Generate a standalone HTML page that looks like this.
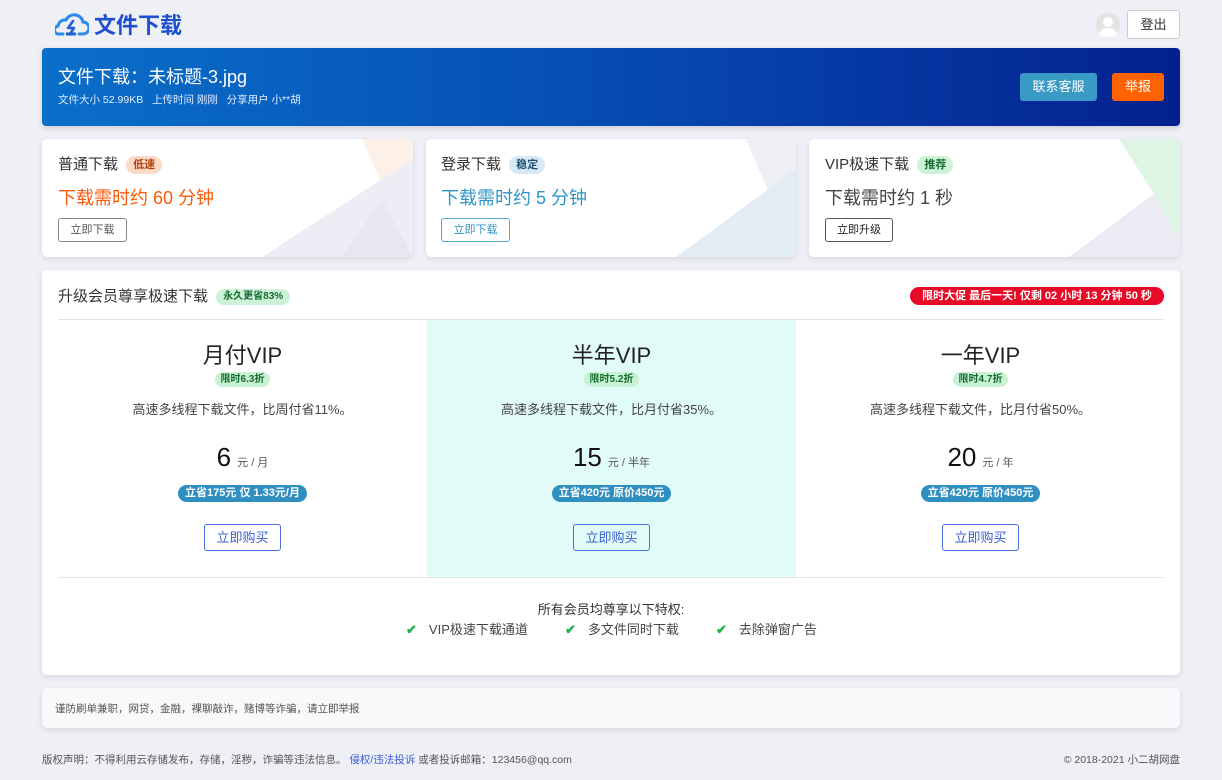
<!DOCTYPE html>
<html><head><meta charset="utf-8"><style>
*{margin:0;padding:0;box-sizing:border-box}
body{width:1222px;height:780px;background:#efeff6;font-family:"Liberation Sans","Noto Sans CJK SC",sans-serif;color:#333;position:relative;overflow:hidden}
.a{position:absolute}
.card{position:absolute;background:#fff;border-radius:5px;box-shadow:0 2px 6px rgba(0,0,0,.1);overflow:hidden}
.tag{display:inline-block;font-size:11px;font-weight:bold;padding:0 7px;line-height:18px;border-radius:9px;vertical-align:middle;margin-left:4px}
.btn{position:absolute;border:1px solid #888;border-radius:3px;font-size:11px;text-align:center;line-height:22px;background:#fff}
.col{position:absolute;top:320px;width:369px;height:257px;text-align:center}
.col h3{font-weight:normal;font-size:22px;color:#222;margin-top:23px;line-height:26px}
.col .t{background:#c9f1d4;color:#146c2e;font-size:10px;font-weight:bold;border-radius:8px;padding:0 6px;line-height:15px;display:inline-block}
.col p{font-size:13px;color:#444;margin-top:12px}
.col .pr{margin-top:24px;font-size:26px;color:#111;line-height:30px}
.col .pr span{font-size:11px;color:#555;margin-left:6px}
.col .bd{display:inline-block;margin-top:7px;background:#2f8fc0;color:#fff;font-size:11px;font-weight:bold;line-height:17px;border-radius:9px;padding:0 7px}
.col .buy{display:block;margin:22px auto 0;width:77px;height:27px;border:1px solid #4a6fe0;color:#3b5fd8;border-radius:3px;font-size:13px;line-height:25px}
.ck{color:#19b34a;font-weight:bold;margin-right:12px}
</style></head><body>
<svg class="a" style="left:55px;top:12px" width="34" height="24" viewBox="0 0 34 24"><path d="M8 22 H4 A4 4 0 0 1 3 14 A7 7 0 0 1 11 8 A9 9 0 0 1 28 10 A6 6 0 0 1 28 22 H24" fill="none" stroke="#2a8bee" stroke-width="3" stroke-linecap="round"/><path d="M18 9 L13 16 H19 L15 22" fill="none" stroke="#1e5fd8" stroke-width="2.5" stroke-linecap="round" stroke-linejoin="round"/><path d="M11 22 H21" stroke="#1e5fd8" stroke-width="3"/></svg>
<div class="a" style="left:94px;top:8px;font-size:22px;font-weight:bold;color:#1d4fcf">文件下载</div>
<div class="a" style="left:1096px;top:13px;width:24px;height:24px;border-radius:50%;background:#e5e2e2;overflow:hidden"><div class="a" style="left:7px;top:4px;width:10px;height:10px;border-radius:50%;background:#fff"></div><div class="a" style="left:3px;top:15px;width:18px;height:14px;border-radius:50%;background:#fff"></div></div>
<div class="a" style="left:1127px;top:10px;width:53px;height:29px;background:#fff;border:1px solid #ccc;border-radius:3px;font-size:13px;text-align:center;line-height:27px;color:#333">登出</div>
<div class="a" style="left:42px;top:48px;width:1138px;height:78px;border-radius:4px;background:linear-gradient(90deg,#0a6fc9 0%,#0650b5 45%,#04208f 100%);box-shadow:0 2px 6px rgba(0,0,0,.15)">
<div class="a" style="left:16px;top:15px;font-size:18px;color:#fff">文件下载：未标题-3.jpg</div>
<div class="a" style="left:16px;top:44px;font-size:10.5px;color:#e2ecff">文件大小 52.99KB &nbsp; 上传时间 刚刚 &nbsp; 分享用户 小**胡</div>
<div class="a" style="left:978px;top:25px;width:77px;height:28px;background:#3a9ac6;border-radius:3px;color:#fff;font-size:13px;text-align:center;line-height:28px">联系客服</div>
<div class="a" style="left:1070px;top:25px;width:52px;height:28px;background:#ff6202;border-radius:3px;color:#fff;font-size:13px;text-align:center;line-height:28px">举报</div>
</div>
<div class="card" style="left:42px;top:139px;width:371px;height:118px">
<svg class="a" style="left:0;top:0" width="371" height="118"><polygon points="320,0 371,0 371,118" fill="#fdf0e6"/><polygon points="371,20 371,118 220,118" fill="#eeedf5"/><polygon points="340,60 371,118 300,118" fill="#e8e6f0"/></svg>
<div class="a" style="left:16px;top:14px;font-size:15px;color:#333">普通下载 <span class="tag" style="background:#fbdac8;color:#b2400c">低速</span></div>
<div class="a" style="left:16px;top:45px;font-size:18px;color:#fb5a0a">下载需时约 60 分钟</div>
<div class="btn" style="left:16px;top:79px;width:69px;height:24px;color:#555">立即下载</div>
</div>
<div class="card" style="left:426px;top:139px;width:370px;height:118px">
<svg class="a" style="left:0;top:0" width="370" height="118"><polygon points="320,0 370,0 370,118" fill="#eeeef5"/><polygon points="370,30 370,118 250,118" fill="#e3ecf5"/></svg>
<div class="a" style="left:15px;top:14px;font-size:15px;color:#333">登录下载 <span class="tag" style="background:#d9e9f4;color:#1f5273">稳定</span></div>
<div class="a" style="left:15px;top:45px;font-size:18px;color:#2f94c6">下载需时约 5 分钟</div>
<div class="btn" style="left:15px;top:79px;width:69px;height:24px;color:#2f94c6;border-color:#55a8d2">立即下载</div>
</div>
<div class="card" style="left:809px;top:139px;width:371px;height:118px">
<svg class="a" style="left:0;top:0" width="371" height="118"><polygon points="310,0 371,0 371,100 345,55" fill="#def4e5"/><polygon points="345,55 371,100 371,118 260,118" fill="#eceaf3"/></svg>
<div class="a" style="left:16px;top:14px;font-size:15px;color:#333">VIP极速下载 <span class="tag" style="background:#cdf2d8;color:#146c2e">推荐</span></div>
<div class="a" style="left:16px;top:45px;font-size:18px;color:#444">下载需时约 1 秒</div>
<div class="btn" style="left:16px;top:79px;width:68px;height:24px;color:#222;border-color:#555">立即升级</div>
</div>
<div class="card" style="left:42px;top:270px;width:1138px;height:405px"></div>
<div class="a" style="left:58px;top:285px;font-size:15px;color:#333">升级会员尊享极速下载 <span class="tag" style="background:#cdf2d8;color:#146c2e;font-size:10px;line-height:16px">永久更省83%</span></div>
<div class="a" style="left:910px;top:287px;width:254px;height:18px;background:#e60a26;color:#fff;font-size:11px;font-weight:bold;line-height:18px;border-radius:9px;text-align:center">限时大促 最后一天! 仅剩 02 小时 13 分钟 50 秒</div>
<div class="a" style="left:58px;top:319px;width:1106px;height:1px;background:#e4e4e4"></div>
<div class="col" style="left:58px"><h3>月付VIP</h3><div class="t">限时6.3折</div><p>高速多线程下载文件，比周付省11%。</p><div class="pr">6<span>元 / 月</span></div><div class="bd">立省175元 仅 1.33元/月</div><div class="buy">立即购买</div></div>
<div class="col" style="left:427px;background:#e1fcf8"><h3>半年VIP</h3><div class="t">限时5.2折</div><p>高速多线程下载文件，比月付省35%。</p><div class="pr">15<span>元 / 半年</span></div><div class="bd">立省420元 原价450元</div><div class="buy">立即购买</div></div>
<div class="col" style="left:796px"><h3>一年VIP</h3><div class="t">限时4.7折</div><p>高速多线程下载文件，比月付省50%。</p><div class="pr">20<span>元 / 年</span></div><div class="bd">立省420元 原价450元</div><div class="buy">立即购买</div></div>
<div class="a" style="left:58px;top:577px;width:1106px;height:1px;background:#e4e4e4"></div>
<div class="a" style="left:0;top:599px;width:1222px;text-align:center;font-size:13px;color:#333">所有会员均尊享以下特权:</div>
<div class="a" style="left:406px;top:619px;font-size:13px;color:#444;white-space:nowrap"><span class="ck">✔</span>VIP极速下载通道</div>
<div class="a" style="left:565px;top:619px;font-size:13px;color:#444;white-space:nowrap"><span class="ck">✔</span>多文件同时下载</div>
<div class="a" style="left:716px;top:619px;font-size:13px;color:#444;white-space:nowrap"><span class="ck">✔</span>去除弹窗广告</div>
<div class="card" style="left:42px;top:688px;width:1138px;height:40px;background:#f9f9fc"><div class="a" style="left:13px;top:13px;font-size:10.5px;color:#555">谨防刷单兼职，网贷，金融，裸聊敲诈，赌博等诈骗，请立即举报</div></div>
<div class="a" style="left:42px;top:752px;font-size:10.5px;color:#555">版权声明：不得利用云存储发布，存储，淫秽，诈骗等违法信息。 <span style="color:#3b5fd8">侵权/违法投诉</span> 或者投诉邮箱：123456@qq.com</div>
<div class="a" style="right:42px;top:752px;font-size:10.5px;color:#555">© 2018-2021 小二胡网盘</div>
</body></html>
